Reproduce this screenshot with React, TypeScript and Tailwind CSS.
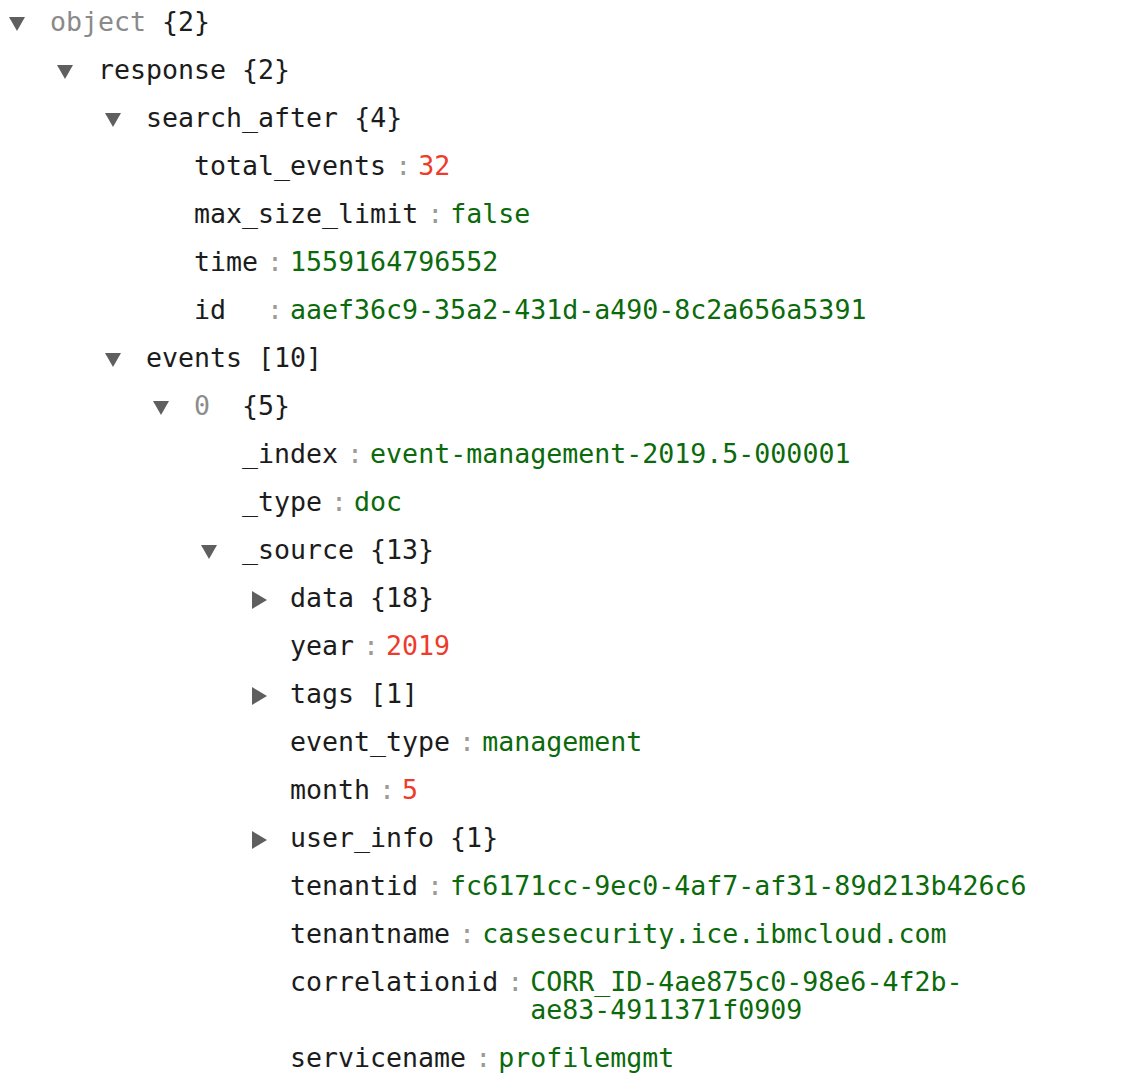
import React from "react";

type Row =
  | { kind: "node"; level: number; open: boolean; label: string; labelGray?: boolean; index?: boolean; count: string }
  | { kind: "leaf"; level: number; k: string; v: string | string[]; color: "red" | "green" };

const rows: Row[] = [
  { kind: "node", level: 0, open: true, label: "object", labelGray: true, count: "{2}" },
  { kind: "node", level: 1, open: true, label: "response", count: "{2}" },
  { kind: "node", level: 2, open: true, label: "search_after", count: "{4}" },
  { kind: "leaf", level: 3, k: "total_events", v: "32", color: "red" },
  { kind: "leaf", level: 3, k: "max_size_limit", v: "false", color: "green" },
  { kind: "leaf", level: 3, k: "time", v: "1559164796552", color: "green" },
  { kind: "leaf", level: 3, k: "id", v: "aaef36c9-35a2-431d-a490-8c2a656a5391", color: "green" },
  { kind: "node", level: 2, open: true, label: "events", count: "[10]" },
  { kind: "node", level: 3, open: true, label: "0", index: true, count: "{5}" },
  { kind: "leaf", level: 4, k: "_index", v: "event-management-2019.5-000001", color: "green" },
  { kind: "leaf", level: 4, k: "_type", v: "doc", color: "green" },
  { kind: "node", level: 4, open: true, label: "_source", count: "{13}" },
  { kind: "node", level: 5, open: false, label: "data", count: "{18}" },
  { kind: "leaf", level: 5, k: "year", v: "2019", color: "red" },
  { kind: "node", level: 5, open: false, label: "tags", count: "[1]" },
  { kind: "leaf", level: 5, k: "event_type", v: "management", color: "green" },
  { kind: "leaf", level: 5, k: "month", v: "5", color: "red" },
  { kind: "node", level: 5, open: false, label: "user_info", count: "{1}" },
  { kind: "leaf", level: 5, k: "tenantid", v: "fc6171cc-9ec0-4af7-af31-89d213b426c6", color: "green" },
  { kind: "leaf", level: 5, k: "tenantname", v: "casesecurity.ice.ibmcloud.com", color: "green" },
  { kind: "leaf", level: 5, k: "correlationid", v: ["CORR_ID-4ae875c0-98e6-4f2b-", "ae83-4911371f0909"], color: "green" },
  { kind: "leaf", level: 5, k: "servicename", v: "profilemgmt", color: "green" },
];

const pad: Record<number, string> = {
  0: "pl-0",
  1: "pl-12",
  2: "pl-24",
  3: "pl-36",
  4: "pl-48",
  5: "pl-60",
};

function Caret({ open }: { open: boolean }) {
  if (open) {
    return (
      <svg width="16" height="14" viewBox="0 0 16 14" className="ml-[9px] mt-[3px]">
        <polygon points="0,0 16,0 8,14" fill="#5f5f5f" />
      </svg>
    );
  }
  return (
    <svg width="15" height="18" viewBox="0 0 15 18" className="ml-[12px] mt-[3px]">
      <polygon points="0,0 15,9 0,18" fill="#5f5f5f" />
    </svg>
  );
}

export default function App() {
  return (
    <div
      className="w-[1034px] bg-white text-[26.6px] leading-[28px] text-[#1c1c1c]"
      style={{ fontFamily: '"DejaVu Sans Mono", "Liberation Mono", monospace' }}
    >
      {rows.map((r, i) => (
        <div key={i} className={`flex items-start pt-[8px] pb-[12px] ${pad[r.level]}`}>
          <div className="flex h-[28px] w-[50px] shrink-0 items-center">
            {r.kind === "node" ? <Caret open={r.open} /> : null}
          </div>
          {r.kind === "node" ? (
            <div className="flex">
              <span
                className={
                  r.index
                    ? "min-w-[48px] text-[#8c8c8c]"
                    : r.labelGray
                    ? "text-[#8a8a8a]"
                    : ""
                }
              >
                {r.label}
              </span>
              <span className={r.index ? "" : "ml-[16px]"}>{r.count}</span>
            </div>
          ) : (
            <div className="flex items-start">
              <span className="min-w-[64px]">{r.k}</span>
              <span className="ml-[9px] mr-[7px] text-[#9a9a9a]">:</span>
              <span className={r.color === "red" ? "text-[#ee3b2b]" : "text-[#0b6a0b]"}>
                {Array.isArray(r.v) ? (
                  <>
                    {r.v[0]}
                    <br />
                    {r.v[1]}
                  </>
                ) : (
                  r.v
                )}
              </span>
            </div>
          )}
        </div>
      ))}
    </div>
  );
}
